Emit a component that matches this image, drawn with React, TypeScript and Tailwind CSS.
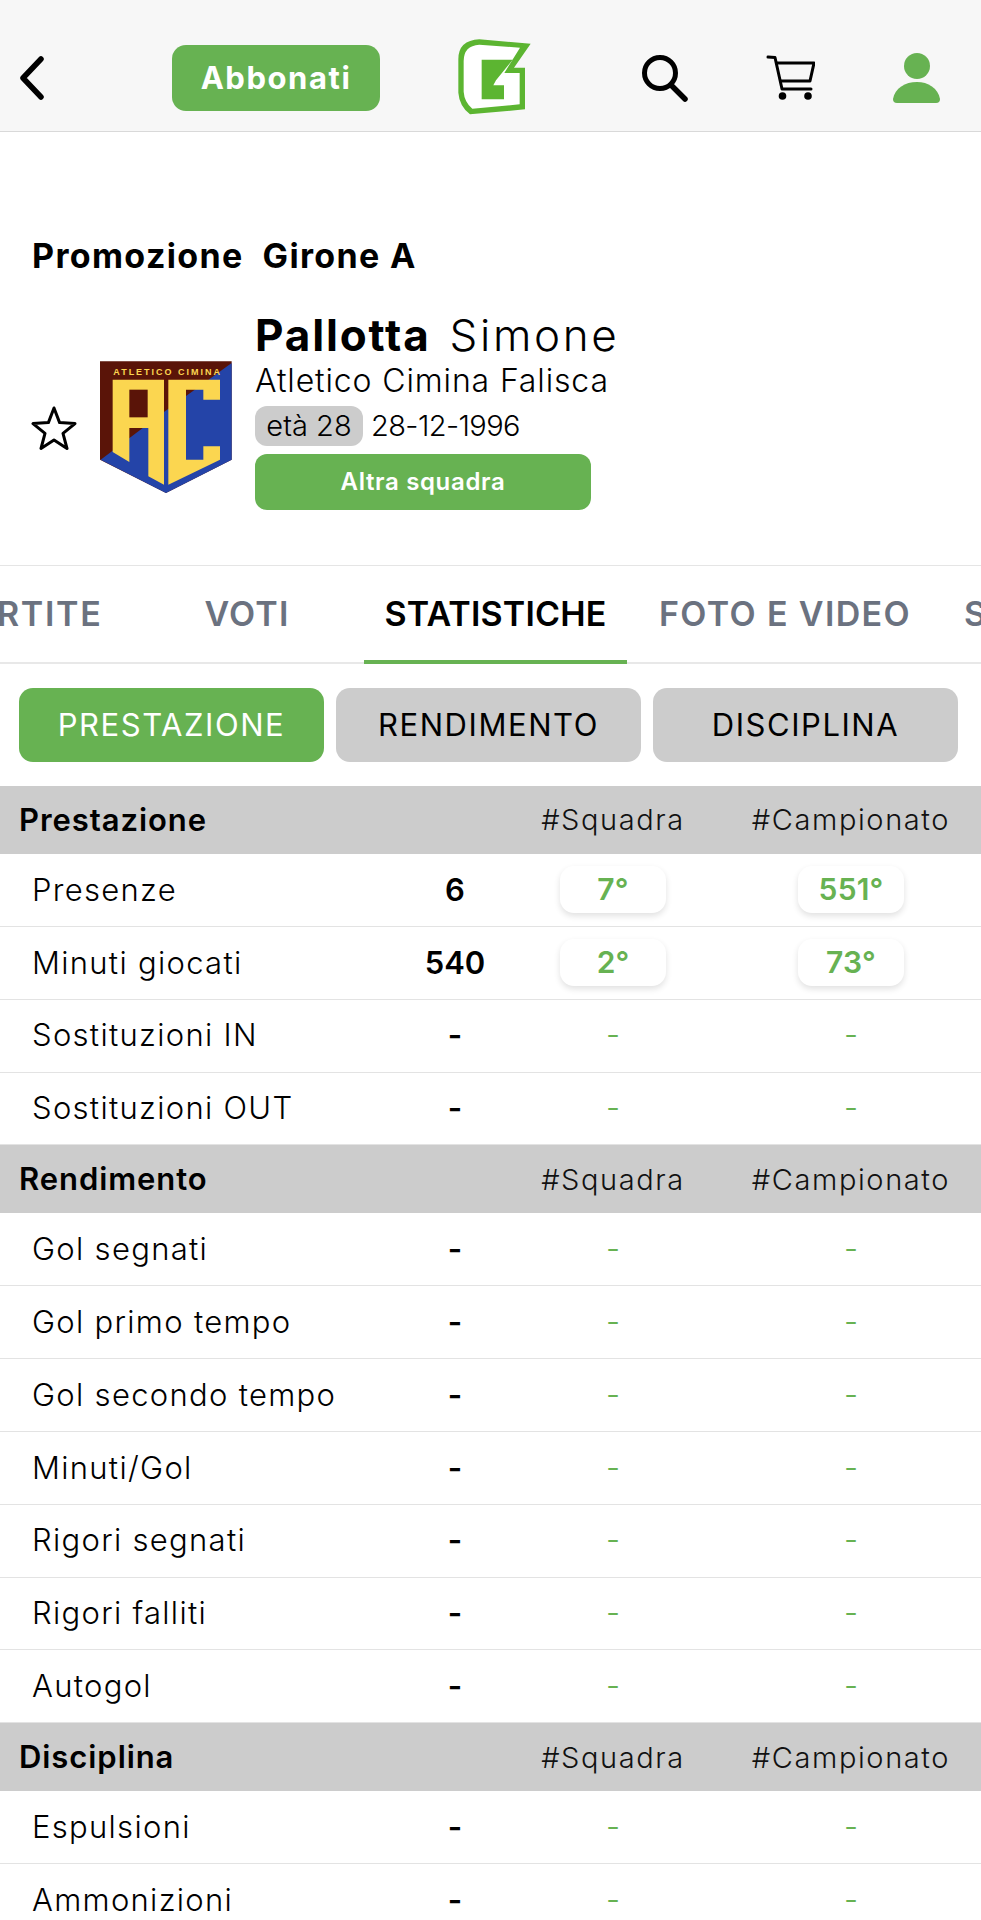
import React from "react";

const FONT = "font-['Inter','Liberation_Sans',sans-serif]";

function Logo() {
  return (
    <svg width="100" height="95" viewBox="0 0 300 285" className="ml-[60px] shrink-0">
      <path d="M272 38 L118 25 Q55 28 55 85 L55 185 Q58 225 90 250 L255 235 L255 110 L222 110 Z" fill="#5cb531" />
      <path d="M240 50 L118 41 Q71 44 71 90 L71 182 Q73 213 97 233 L239 220 L239 126 L193 126 Z" fill="#ffffff" />
      <path d="M125 86 L218 86 L168 148 L160 163 L192 163 L192 205 L125 205 Z" fill="#5cb531" />
    </svg>
  );
}

function Crest() {
  return (
    <svg width="155" height="155" viewBox="0 0 465 465" className="shrink-0">
      <path d="M30 40 L425 40 L425 335 L228 435 L30 335 Z" fill="#5a1408" />
      <path d="M425 45 L425 335 L228 435 L32 335 L225 190 Z" fill="#2444a8" />
      <path d="M68 95 L222 95 L222 410 L175 385 L175 240 L118 240 L118 342 L68 312 Z" fill="#fbd650" />
      <rect x="118" y="125" width="55" height="83" fill="#5a1408" />
      <path d="M235 95 L390 95 L390 155 L340 155 L340 125 L288 125 L288 335 L340 335 L340 295 L390 295 L390 335 L235 410 Z" fill="#fbd650" />
      <text x="70" y="82" fill="#fbd650" fontSize="27" fontWeight="700" textLength="320" fontFamily="Liberation Sans, sans-serif">ATLETICO CIMINA</text>
    </svg>
  );
}

function Header() {
  return (
    <header className="flex h-[132px] items-center border-b border-[#d9d9d9] bg-[#f7f7f7] pl-[19px] pt-[25px]">
      <svg width="25" height="44" viewBox="0 0 25 44" className="shrink-0">
        <path d="M22 3 L4 22 L22 41" fill="none" stroke="#000" strokeWidth="5.5" strokeLinecap="round" strokeLinejoin="round" />
      </svg>
      <div className="ml-[128px] flex h-[66px] w-[208px] shrink-0 items-center justify-center rounded-[14px] bg-[#67b252] text-[31px] font-bold tracking-[0.05em] text-white">
        Abbonati
      </div>
      <Logo />
      <svg width="48" height="48" viewBox="0 0 48 48" className="ml-[100px] shrink-0">
        <circle cx="20" cy="19" r="15.5" fill="none" stroke="#000" strokeWidth="5" />
        <path d="M31 31 L45 45" stroke="#000" strokeWidth="5.5" strokeLinecap="round" />
      </svg>
      <svg width="49" height="46" viewBox="0 0 49 46" className="ml-[78px] shrink-0">
        <path d="M2 2 L9 2.5 L16 34 L45 34" fill="none" stroke="#000" strokeWidth="3" strokeLinecap="round" strokeLinejoin="round" />
        <path d="M10.5 8 L48 8 L44 26 L14 26" fill="none" stroke="#000" strokeWidth="3" strokeLinejoin="round" />
        <circle cx="16.5" cy="41" r="3.8" fill="#000" />
        <circle cx="42" cy="41" r="3.8" fill="#000" />
      </svg>
      <svg width="48" height="52" viewBox="0 0 48 52" className="ml-[77px] shrink-0">
        <circle cx="25" cy="14" r="13" fill="#67b252" />
        <path d="M1 47 C3 36 13 30 25 30 C36 30 46 36 48 47 Q48 51 44 51 L5 51 Q1 51 1 47 Z" fill="#67b252" />
      </svg>
    </header>
  );
}

function Player() {
  return (
    <section className="border-b border-[#e5e5e5] pb-[55px]">
      <h1 className="ml-[32px] mt-[104px] text-[34px] font-bold leading-[40px] tracking-[0.04em] whitespace-pre text-black">
        Promozione{"  "}Girone A
      </h1>
      <div className="mt-[36px] flex items-end pl-[31px]">
        <div className="mb-[7px] flex items-center">
          <svg width="46" height="46" viewBox="0 0 46 46" className="mt-[4px] shrink-0">
            <path d="M23 3 L28.6 17.6 L44 18.6 L32 28.4 L36 43.5 L23 35 L10 43.5 L14 28.4 L2 18.6 L17.4 17.6 Z" fill="none" stroke="#000" strokeWidth="3" strokeLinejoin="round" />
          </svg>
          <div className="ml-[13px]"><Crest /></div>
        </div>
        <div className="ml-[10px]">
          <div className="flex h-[46px] items-center text-[44px] text-black">
            <span className="font-bold tracking-[0.042em]">Pallotta</span>
            <span className="ml-[19px] font-light tracking-[0.06em]">Simone</span>
          </div>
          <div className="mt-[5px] h-[36px] text-[32px] font-light leading-[36px] tracking-[0.027em] text-black">
            Atletico Cimina Falisca
          </div>
          <div className="mt-[7px] flex h-[40px] items-center text-[29px] font-light text-black">
            <span className="flex h-[40px] w-[108px] items-center justify-center rounded-[12px] bg-[#cccccc]">età 28</span>
            <span className="ml-[8px] tracking-[-0.02em]">28-12-1996</span>
          </div>
          <div className="mt-[8px] flex h-[56px] w-[336px] items-center justify-center rounded-[12px] bg-[#67b252] text-[24px] font-semibold tracking-[0.027em] text-white">
            Altra squadra
          </div>
        </div>
      </div>
    </section>
  );
}

const TABS: { label: string; cls: string }[] = [
  { label: "PARTITE", cls: "w-[218px] justify-center pl-[10px] pb-[4px] tracking-[0.05em] text-[#6b7280]" },
  { label: "VOTI", cls: "w-[234px] justify-center pb-[4px] tracking-[0.035em] text-[#6b7280]" },
  { label: "STATISTICHE", cls: "w-[263px] justify-center tracking-[0.005em] text-black border-b-4 border-[#67b252]" },
  { label: "FOTO E VIDEO", cls: "w-[316px] justify-center pb-[4px] tracking-[0.04em] text-[#6b7280]" },
  { label: "STAMPA", cls: "w-[200px] justify-start pl-[21px] pb-[4px] tracking-[0.03em] text-[#6b7280]" },
];

function Tabs() {
  return (
    <nav className="h-[98px] overflow-hidden shadow-[inset_0_-2px_0_#e8e8e8]">
      <div className="-ml-[88px] flex h-full w-[1100px]">
        {TABS.map((t) => (
          <div key={t.label} className={`flex h-full shrink-0 items-center text-[34px] font-semibold ${t.cls}`}>
            {t.label}
          </div>
        ))}
      </div>
    </nav>
  );
}

function Filters() {
  const names = ["PRESTAZIONE", "RENDIMENTO", "DISCIPLINA"];
  return (
    <div className="flex h-[122px] items-center gap-[12px] pl-[19px]">
      {names.map((n, i) => (
        <div
          key={n}
          className={
            i === 0
              ? "flex h-[74px] w-[305px] items-center justify-center rounded-[14px] bg-[#67b252] text-[31px] font-normal tracking-[0.05em] text-white"
              : "flex h-[74px] w-[305px] items-center justify-center rounded-[14px] bg-[#cccccc] text-[31px] font-normal tracking-[0.05em] text-black"
          }
        >
          {n}
        </div>
      ))}
    </div>
  );
}

const GRID = "grid grid-cols-[405px_100px_216px_260px] items-center";

function SectionHead({ title }: { title: string }) {
  return (
    <div className={`${GRID} h-[68px] bg-[#cccccc] text-[29px] font-light tracking-[0.055em] text-[#111111]`}>
      <div className="pl-[19px] text-[31px] font-semibold tracking-[0.03em] text-black">{title}</div>
      <div />
      <div className="text-center">#Squadra</div>
      <div className="text-center">#Campionato</div>
    </div>
  );
}

function Pill({ children }: { children: React.ReactNode }) {
  return (
    <span className="mx-auto flex h-[47px] w-[106px] items-center justify-center rounded-[14px] bg-white text-[30px] font-semibold tracking-[0.005em] text-[#67b252] shadow-[0_3px_6px_rgba(0,0,0,0.12)]">
      {children}
    </span>
  );
}

function Row({ label, value, a, b }: { label: string; value?: string; a?: string; b?: string }) {
  return (
    <div className={`${GRID} h-[72.85px] border-b border-[#e3e3e3] text-[31px]`}>
      <div className="pl-[32px] font-light tracking-[0.042em] text-black">{label}</div>
      <div className="text-center font-semibold text-black">{value ?? "-"}</div>
      <div className="text-center text-[#67b252]">{a ? <Pill>{a}</Pill> : <span className="font-light">-</span>}</div>
      <div className="text-center text-[#67b252]">{b ? <Pill>{b}</Pill> : <span className="font-light">-</span>}</div>
    </div>
  );
}

export default function App() {
  return (
    <div className={`h-[1920px] w-[981px] overflow-hidden bg-white ${FONT}`}>
      <Header />
      <Player />
      <Tabs />
      <Filters />
      <SectionHead title="Prestazione" />
      <Row label="Presenze" value="6" a="7°" b="551°" />
      <Row label="Minuti giocati" value="540" a="2°" b="73°" />
      <Row label="Sostituzioni IN" />
      <Row label="Sostituzioni OUT" />
      <SectionHead title="Rendimento" />
      <Row label="Gol segnati" />
      <Row label="Gol primo tempo" />
      <Row label="Gol secondo tempo" />
      <Row label="Minuti/Gol" />
      <Row label="Rigori segnati" />
      <Row label="Rigori falliti" />
      <Row label="Autogol" />
      <SectionHead title="Disciplina" />
      <Row label="Espulsioni" />
      <Row label="Ammonizioni" />
    </div>
  );
}
